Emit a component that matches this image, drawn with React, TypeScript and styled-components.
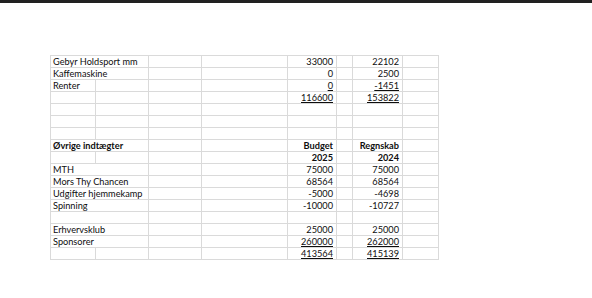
import React from "react";
import styled, { createGlobalStyle, css } from "styled-components";

const GlobalStyle = createGlobalStyle`
  html, body {
    margin: 0;
    padding: 0;
    background: #ffffff;
  }
  * {
    box-sizing: border-box;
  }
`;

const TopBar = styled.div`
  height: 3px;
  background: #212121;
`;

const Page = styled.div`
  padding: 52px 0 0 50px;
`;

const Sheet = styled.div`
  display: grid;
  grid-template-columns: 45px 53px 53px 86px 49px 16px 50px 36px;
  grid-auto-rows: 12px;
  width: max-content;
  border-left: 1px solid #dadada;
  border-top: 1px solid #dadada;
  font-family: Lato, "Liberation Sans", sans-serif;
  font-size: 9.2px;
  color: #0e0e0e;
`;

const Cell = styled.div<{ $span?: number; $right?: boolean; $bold?: boolean }>`
  grid-column: span ${(p) => p.$span ?? 1};
  border-right: 1px solid #dadada;
  border-bottom: 1px solid #dadada;
  padding: 0 3px 0 2px;
  line-height: 11px;
  white-space: nowrap;
  overflow: visible;
  text-align: ${(p) => (p.$right ? "right" : "left")};
  ${(p) =>
    p.$bold &&
    css`
      font-weight: 700;
    `}
`;

const Under = styled.span`
  text-decoration: underline;
  text-underline-offset: 1px;
`;

type Val = { t: string; u?: boolean; b?: boolean };
type Row = { label?: string; bold?: boolean; merged?: boolean; budget?: Val; result?: Val };

const rows: Row[] = [
  { label: "Gebyr Holdsport mm", merged: true, budget: { t: "33000" }, result: { t: "22102" } },
  { label: "Kaffemaskine", merged: true, budget: { t: "0" }, result: { t: "2500" } },
  { label: "Renter", budget: { t: "0", u: true }, result: { t: "-1451", u: true } },
  { budget: { t: "116600", u: true }, result: { t: "153822", u: true } },
  {},
  {},
  {},
  { label: "Øvrige indtægter", bold: true, merged: true, budget: { t: "Budget", b: true }, result: { t: "Regnskab", b: true } },
  { budget: { t: "2025", b: true }, result: { t: "2024", b: true } },
  { label: "MTH", merged: true, budget: { t: "75000" }, result: { t: "75000" } },
  { label: "Mors Thy Chancen", merged: true, budget: { t: "68564" }, result: { t: "68564" } },
  { label: "Udgifter hjemmekamp", merged: true, budget: { t: "-5000" }, result: { t: "-4698" } },
  { label: "Spinning", merged: true, budget: { t: "-10000" }, result: { t: "-10727" } },
  { merged: true },
  { label: "Erhvervsklub", merged: true, budget: { t: "25000" }, result: { t: "25000" } },
  { label: "Sponsorer", merged: true, budget: { t: "260000", u: true }, result: { t: "262000", u: true } },
  { budget: { t: "413564", u: true }, result: { t: "415139", u: true } },
];

const Amount = ({ v }: { v?: Val }) => (
  <Cell $right $bold={v?.b}>
    {v ? v.u ? <Under>{v.t}</Under> : v.t : null}
  </Cell>
);

export default function App() {
  return (
    <>
      <GlobalStyle />
      <TopBar />
      <Page>
        <Sheet>
          {rows.map((r, i) => (
            <React.Fragment key={i}>
              {r.merged ? (
                <Cell $span={2} $bold={r.bold}>
                  {r.label}
                </Cell>
              ) : (
                <>
                  <Cell $bold={r.bold}>{r.label}</Cell>
                  <Cell />
                </>
              )}
              <Cell />
              <Cell />
              <Amount v={r.budget} />
              <Cell />
              <Amount v={r.result} />
              <Cell />
            </React.Fragment>
          ))}
        </Sheet>
      </Page>
    </>
  );
}
